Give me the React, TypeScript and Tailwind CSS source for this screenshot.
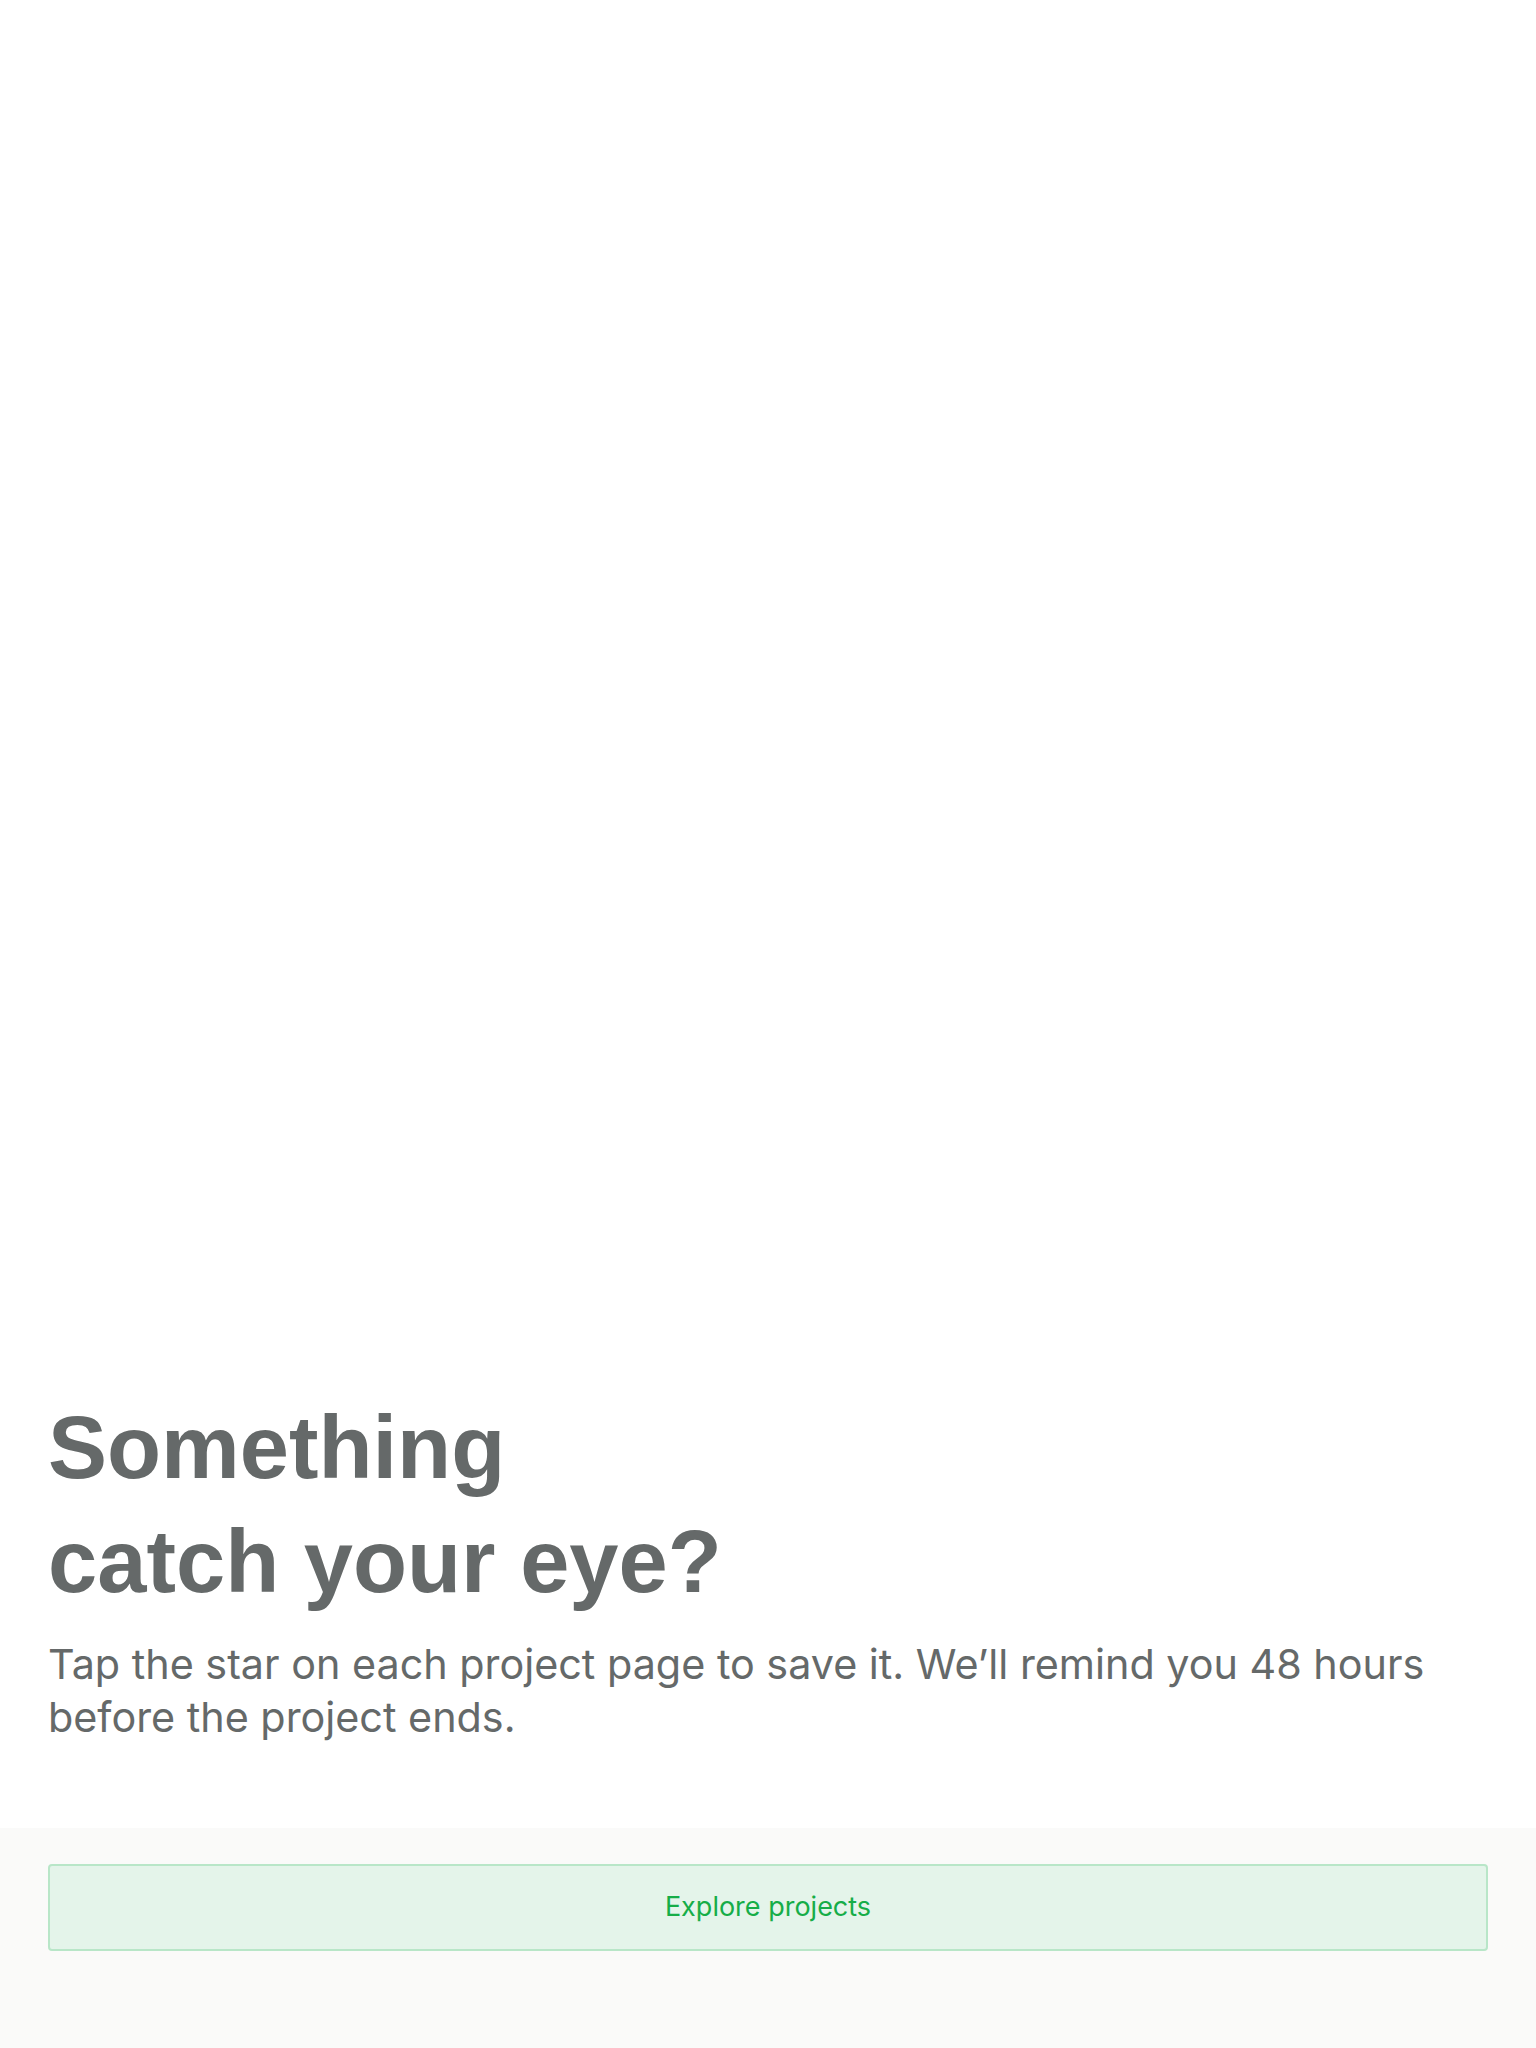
import React from 'react';

// Empty state shown when the user has no saved projects
const App: React.FC = () => {
  return (
    <div className="flex min-h-screen w-full flex-col bg-white">
      <div className="flex flex-1 flex-col justify-end px-12 pb-[84px]">
        <h1 className="font-['Liberation_Sans',Arial,sans-serif] text-[88.5px] font-bold leading-[114px] text-[#656969]">
          Something
          <br />
          catch your eye?
        </h1>
        <p className="mt-[19px] font-['Inter',sans-serif] text-[41.3px] leading-[53px] text-[#656969]">
          Tap the star on each project page to save it. We’ll remind you 48 hours before the project ends.
        </p>
      </div>
      <div className="h-[220px] bg-[#fafaf9] px-12 pt-9">
        <button className="flex h-[87px] w-full items-center justify-center rounded-[4px] border-2 border-[#b8e6c8] bg-[#e4f4ea] font-['Inter',sans-serif] text-[27px] text-[#16ad48]">
          Explore projects
        </button>
      </div>
    </div>
  );
};

export default App;
